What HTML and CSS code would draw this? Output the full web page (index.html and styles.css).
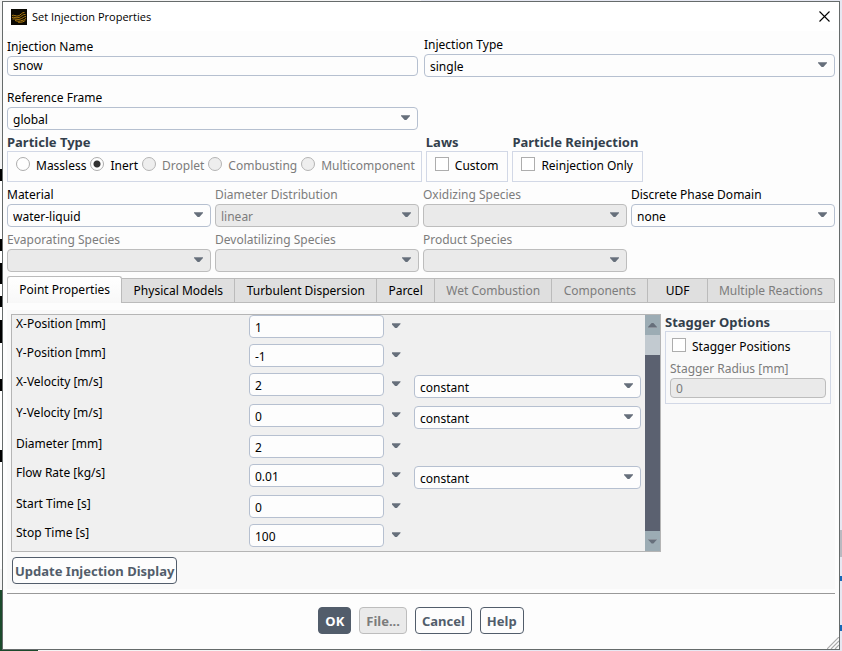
FILE: index.html
```html
<!DOCTYPE html>
<html lang="en">
<head>
<meta charset="utf-8">
<title>Set Injection Properties</title>
<link rel="stylesheet" href="styles.css">
</head>
<body>
<form class="dialog">
  <header class="titlebar">
    <svg class="logo" viewBox="0 0 16 16" aria-hidden="true">
      <rect width="16" height="16" fill="#0b0903"/>
      <g fill="none" stroke="#b07c10" stroke-width="1">
        <path d="M1 6.500C3 5.500 4.500 7.500 7 7C9.500 6.500 11 3 13.500 3.500"/>
        <path d="M1 8.500C3 7.500 5 9.500 8 8.500C10.500 7.500 12 5 14.500 5.500"/>
        <path d="M1.500 10C4 9.500 6 11 9 10.200C11.500 9.500 13 7.500 15 7.500"/>
        <path d="M4 11.500C7 12.800 9 12 11 11.500C13 11 14.500 10 15 9"/>
        <path d="M7 13.200C10 13.500 13 13 14.500 11"/>
      </g>
    </svg>
    <h1 class="title">Set Injection Properties</h1>
    <button type="button" class="close" aria-label="Close">
      <svg viewBox="0 0 11 11" aria-hidden="true"><path d="M.5 .5l10 10M10.500 .5l-10 10" fill="none" stroke="#000" stroke-width="1.100"/></svg>
    </button>
  </header>

  <main class="content">
    <div class="halves">
      <div class="field">
        <label for="name">Injection Name</label>
        <input class="box short" id="name" type="text" value="snow">
      </div>
      <div class="field">
        <label for="type">Injection Type</label>
        <span class="drop"><select class="box" id="type"><option>single</option></select></span>
      </div>
    </div>
    <div class="halves frame-row">
      <div class="field">
        <label for="frame">Reference Frame</label>
        <span class="drop"><select class="box" id="frame"><option>global</option></select></span>
      </div>
    </div>

    <div class="groups">
      <section class="group particle">
        <h2>Particle Type</h2>
        <div class="group-box">
          <label class="choice"><input type="radio" name="ptype">Massless</label>
          <label class="choice"><input type="radio" name="ptype" checked>Inert</label>
          <label class="choice off"><input type="radio" name="ptype" disabled>Droplet</label>
          <label class="choice off"><input type="radio" name="ptype" disabled>Combusting</label>
          <label class="choice off"><input type="radio" name="ptype" disabled>Multicomponent</label>
        </div>
      </section>
      <section class="group">
        <h2>Laws</h2>
        <div class="group-box"><label class="choice"><input type="checkbox">Custom</label></div>
      </section>
      <section class="group">
        <h2>Particle Reinjection</h2>
        <div class="group-box"><label class="choice"><input type="checkbox">Reinjection Only</label></div>
      </section>
    </div>

    <div class="quarters">
      <div class="field">
        <label for="material">Material</label>
        <span class="drop"><select class="box" id="material"><option>water-liquid</option></select></span>
      </div>
      <div class="field off">
        <label for="diamdist">Diameter Distribution</label>
        <span class="drop"><select class="box" id="diamdist" disabled><option>linear</option></select></span>
      </div>
      <div class="field off">
        <label for="oxid">Oxidizing Species</label>
        <span class="drop"><select class="box" id="oxid" disabled></select></span>
      </div>
      <div class="field">
        <label for="domain">Discrete Phase Domain</label>
        <span class="drop"><select class="box" id="domain"><option>none</option></select></span>
      </div>
      <div class="field off">
        <label for="evap">Evaporating Species</label>
        <span class="drop"><select class="box" id="evap" disabled></select></span>
      </div>
      <div class="field off">
        <label for="devol">Devolatilizing Species</label>
        <span class="drop"><select class="box" id="devol" disabled></select></span>
      </div>
      <div class="field off">
        <label for="product">Product Species</label>
        <span class="drop"><select class="box" id="product" disabled></select></span>
      </div>
    </div>

    <div class="tabs" role="tablist">
      <button type="button" role="tab" class="tab active" aria-selected="true">Point Properties</button>
      <button type="button" role="tab" class="tab">Physical Models</button>
      <button type="button" role="tab" class="tab">Turbulent Dispersion</button>
      <button type="button" role="tab" class="tab">Parcel</button>
      <button type="button" role="tab" class="tab" disabled>Wet Combustion</button>
      <button type="button" role="tab" class="tab" disabled>Components</button>
      <button type="button" role="tab" class="tab udf">UDF</button>
      <button type="button" role="tab" class="tab" disabled>Multiple Reactions</button>
    </div>

    <div class="panel">
      <div class="panel-top">
        <div class="scroller">
          <div class="rows">
            <div class="row"><label for="xpos">X-Position [mm]</label><input class="box" id="xpos" type="text" value="1"><button type="button" class="more" aria-label="X-Position options"></button></div>
            <div class="row"><label for="ypos">Y-Position [mm]</label><input class="box" id="ypos" type="text" value="-1"><button type="button" class="more" aria-label="Y-Position options"></button></div>
            <div class="row"><label for="xvel">X-Velocity [m/s]</label><input class="box" id="xvel" type="text" value="2"><button type="button" class="more" aria-label="X-Velocity options"></button><span class="drop"><select class="box" aria-label="X-Velocity profile"><option>constant</option></select></span></div>
            <div class="row"><label for="yvel">Y-Velocity [m/s]</label><input class="box" id="yvel" type="text" value="0"><button type="button" class="more" aria-label="Y-Velocity options"></button><span class="drop"><select class="box" aria-label="Y-Velocity profile"><option>constant</option></select></span></div>
            <div class="row"><label for="diam">Diameter [mm]</label><input class="box" id="diam" type="text" value="2"><button type="button" class="more" aria-label="Diameter options"></button></div>
            <div class="row"><label for="flow">Flow Rate [kg/s]</label><input class="box" id="flow" type="text" value="0.01"><button type="button" class="more" aria-label="Flow Rate options"></button><span class="drop"><select class="box" aria-label="Flow Rate profile"><option>constant</option></select></span></div>
            <div class="row"><label for="start">Start Time [s]</label><input class="box" id="start" type="text" value="0"><button type="button" class="more" aria-label="Start Time options"></button></div>
            <div class="row"><label for="stop">Stop Time [s]</label><input class="box" id="stop" type="text" value="100"><button type="button" class="more" aria-label="Stop Time options"></button></div>
          </div>
          <div class="scrollbar">
            <button type="button" class="step up" aria-label="Scroll up"></button>
            <div class="track"></div>
            <div class="thumb"></div>
            <button type="button" class="step" aria-label="Scroll down"></button>
          </div>
        </div>
        <section class="group stagger">
          <h2>Stagger Options</h2>
          <div class="group-box">
            <label class="choice"><input type="checkbox">Stagger Positions</label>
            <div class="field off">
              <label for="radius">Stagger Radius [mm]</label>
              <input class="box short" id="radius" type="text" value="0" disabled>
            </div>
          </div>
        </section>
      </div>
      <button type="button" class="btn">Update Injection Display</button>
    </div>

    <footer class="actions">
      <button type="button" class="btn primary">OK</button>
      <button type="button" class="btn" disabled>File...</button>
      <button type="button" class="btn">Cancel</button>
      <button type="button" class="btn">Help</button>
    </footer>
  </main>
  <svg class="grip" viewBox="0 0 12 12" aria-hidden="true"><path d="M0 12L12 0M4 12l8-8M8 12l4-4" fill="none" stroke="#aaa" stroke-width="1.200"/></svg>
</form>
</body>
</html>
```
FILE: styles.css
```css
* { box-sizing: border-box; }

body {
  margin: 0;
  padding: 1px 2px;
  min-height: 100vh;
  display: flex;
  font: 12px/18px "Noto Sans", sans-serif;
  color: #000;
  /* slivers of the windows lying behind the dialog */
  background:
    linear-gradient(#1c4a2c, #1c4a2c) 0 100% / 38px 61px no-repeat,
    linear-gradient(#000 0 12px, #fff 12px 70px, #000 70px 82px, #fff 82px 94px, #000 94px 115px, #fff 115px 127px, #000 127px 138px, #fff 138px 151px, #000 151px 174px, #fff 174px 210px, #000 210px 222px, #fff 222px 281px, #000 281px 293px, #fff 293px) 0 169px / 2px 400px no-repeat,
    linear-gradient(#1668b8, #1668b8) 100% 576px / 2px 5px no-repeat,
    linear-gradient(#1668b8, #1668b8) 100% 625px / 2px 6px no-repeat,
    linear-gradient(#b9b9c0, #b9b9c0) 100% 530px / 2px 27px no-repeat,
    linear-gradient(90deg, #f4f4f4 50%, #e6e8f2 50%);
}

h1, h2 { margin: 0; font-size: inherit; }
button, input, select { font: inherit; color: inherit; margin: 0; }
button { padding: 0; border: 0; background: none; }

.dialog {
  position: relative;
  flex: 1;
  min-width: 0;
  border: 1px solid #666b6b;
  background: #fdfdfd;
}

.titlebar {
  display: flex;
  align-items: center;
  gap: 5px;
  height: 29px;
  padding: 0 9px 0 8px;
  background: #fff;
}
.logo { width: 16px; height: 16px; }
.title { flex: 1; font: 11px/18px "Open Sans", sans-serif; }
.close { width: 11px; height: 11px; line-height: 0; }

.content { padding: 5px 4px 0; }

.halves {
  display: grid;
  grid-template-columns: 1fr 1fr;
  align-items: center;
  gap: 6px;
}
.frame-row { margin-top: 12px; }

.quarters {
  display: grid;
  grid-template-columns: repeat(4, 1fr);
  gap: 4px;
  margin-top: 4px;
}

.field { display: flex; flex-direction: column; min-width: 0; }
.off { color: #7c7c7c; }

.box {
  display: block;
  width: 100%;
  height: 23px;
  padding: 1px 5px 0;
  border: 1px solid #b6c0d0;
  border-radius: 4px;
  background: #fdfdfd;
  appearance: none;
  outline: 0;
}
select.box { padding-top: 2px; }
.box.short { height: 20px; padding-top: 0; }
.box:disabled { background: #eaeaea; border-color: #bdbdbd; color: #7c7c7c; opacity: 1; }

.drop { position: relative; display: block; }
.drop::after, .more::before, .step::before {
  content: "";
  width: 9px;
  height: 5px;
  background: linear-gradient(#8c929b 1px, #666f7b 1px);
  clip-path: polygon(0 0, 100% 0, 100% 20%, 60% 100%, 40% 100%, 0 20%);
}
.drop::after { position: absolute; right: 8px; top: 8px; pointer-events: none; }

.groups { display: flex; gap: 4px; margin-top: 4px; }
.group h2 { font-size: 13px; line-height: 17px; color: #333f4c; font-weight: bold; }
.group-box {
  display: flex;
  gap: 4px;
  height: 31px;
  padding: 5px 9px 5px 8px;
  border: 1px solid #d2d8e6;
}
.particle .group-box { padding-right: 6px; }
.choice { display: flex; gap: 6px; white-space: nowrap; }
.choice input {
  appearance: none;
  width: 14px;
  height: 14px;
  border: 1px solid #adadad;
  background: #fff;
}
.choice input[type="radio"] { border-radius: 50%; }
.choice input[type="radio"]:checked { background: radial-gradient(circle, #333 3px, #fff 4px); }
.choice input:disabled { background: #eee; border-color: #b4b4b4; }

.tabs { display: flex; align-items: flex-end; margin-top: 4px; height: 27px; }
.tab {
  flex: auto;
  height: 25px;
  border: 1px solid #bbb;
  border-left: 0;
  background: #dfdfdf;
  white-space: nowrap;
}
.tab:disabled { color: #7c7c7c; }
.tab:last-child { border-top-right-radius: 3px; }
.tab.udf { padding: 0 6px; }
.tab.active {
  height: 27px;
  border-left: 1px solid #bbb;
  border-bottom: 0;
  border-radius: 3px 3px 0 0;
  background: linear-gradient(#fff, #f8f8f8);
}

.panel { margin-top: 7px; padding: 4px 4px 5px; background: #f9f9f9; }
.panel-top { display: flex; gap: 4px; margin-bottom: 5px; }
.scroller {
  flex: 1;
  display: flex;
  border: 1px solid #b5b5b5;
  background: #f0f0f0;
}
.rows {
  flex: 1;
  display: flex;
  flex-direction: column;
  gap: 6px;
  padding: 0 4px 4px;
}
.row {
  display: grid;
  grid-template-columns: 233px 135px 24px 1fr;
  align-items: start;
}
.row .drop { margin: 2px 0 0 6px; }
.more { display: flex; justify-content: center; padding: 8px 0; }

.scrollbar { width: 15px; display: flex; flex-direction: column; }
.step { display: flex; justify-content: center; align-items: center; height: 20px; background: #9cacb4; }
.up::before { transform: rotate(180deg); }
.track { height: 20px; background: #c2cad0; }
.thumb { flex: 1; background: #5b6170; }

.stagger { width: 166px; }
.stagger .group-box { flex-direction: column; gap: 4px; height: 73px; padding: 6px 4px 4px; }
.stagger .choice { padding-left: 2px; }

.btn {
  height: 27px;
  padding: 0 6px;
  border: 1px solid #525d6b;
  border-radius: 4px;
  background: #fdfdfd;
  color: #525d6b;
  font-size: 13px;
  font-weight: bold;
}
.panel .btn { display: block; margin-left: 1px; padding: 0 2px; }
.btn.primary { background: #525d6b; color: #fff; }
.btn:disabled { background: #eaeaea; border-color: #bdbdbd; color: #7c7c7c; }

.actions {
  display: flex;
  justify-content: center;
  gap: 8px;
  margin-top: 4px;
  padding-top: 13px;
  border-top: 1px solid #999;
}
.grip { position: absolute; right: 0; bottom: 0; width: 12px; height: 12px; }
```
